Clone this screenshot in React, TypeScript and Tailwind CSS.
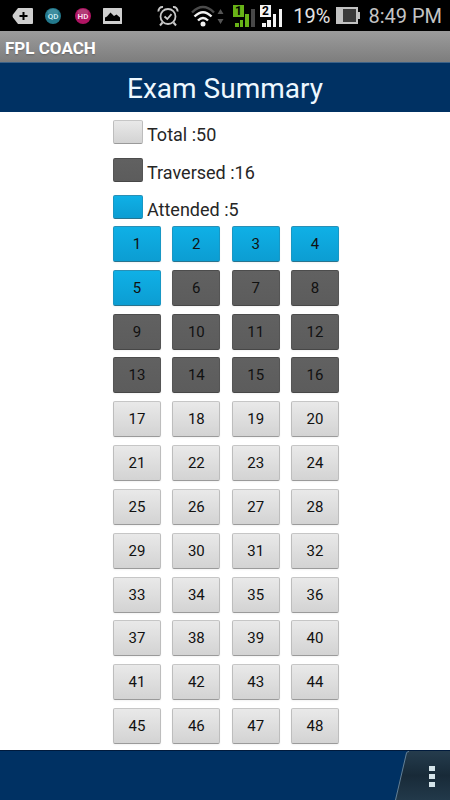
import React, { useState } from "react";
import clsx from "clsx";

const TOTAL = 50;
const TRAVERSED = 16;
const ATTENDED = 5;
const PER_PAGE = 48;

type Status = "attended" | "traversed" | "open";

// holo style button faces
const faces: Record<Status, string> = {
  attended:
    "border-t-[#2a8fb5] border-x-[#1897c4] border-b-[#28748f] bg-linear-to-b from-[#0fb0e6] to-[#0c9dd2]",
  traversed:
    "border-t-[#4c4c4c] border-x-[#555555] border-b-[#474747] bg-linear-to-b from-[#616161] to-[#5c5c5c]",
  open: "border-t-[#c6c6c6] border-x-[#bdbdbd] border-b-[#9a9a9a] bg-linear-to-b from-[#e9e9e9] to-[#d3d3d3]",
};

function statusOf(n: number): Status {
  if (n <= ATTENDED) return "attended";
  if (n <= TRAVERSED) return "traversed";
  return "open";
}

function StatusBar() {
  return (
    <div className="flex h-[31px] items-center justify-between bg-black pr-2 pl-3 text-[#c4c4c4]">
      <div className="flex items-center">
        <svg width="21" height="18" viewBox="0 0 21 18" className="mr-3">
          <path d="M6 1h14a1 1 0 0 1 1 1v14a1 1 0 0 1-1 1H6L1 10.500Q0 9 1 7.500Z" fill="#cfcfcf" />
          <path d="M11.500 5v8M7.500 9h8" stroke="#000" strokeWidth="2" />
        </svg>
        <svg width="16" height="16" viewBox="0 0 16 16" className="mr-3.5">
          <circle cx="8" cy="8" r="8" fill="#23798d" />
          <ellipse cx="8" cy="4" rx="5.500" ry="3" fill="#3f8d9f" />
          <text x="8" y="11" textAnchor="middle" fontSize="8" fontWeight="700" fill="#c6e6ed" fontFamily="Roboto">QD</text>
        </svg>
        <svg width="16" height="16" viewBox="0 0 16 16" className="mr-3">
          <circle cx="8" cy="8" r="8" fill="#b01463" />
          <ellipse cx="8" cy="4" rx="5.500" ry="3" fill="#b23c77" />
          <text x="8" y="11" textAnchor="middle" fontSize="8" fontWeight="700" fill="#f6dbe8" fontFamily="Roboto">HD</text>
        </svg>
        <svg width="19" height="16" viewBox="0 0 19 16">
          <rect width="19" height="16" rx="0.500" fill="#cfcfcf" />
          <path d="M2 13V9.500l2-1 3.500-4L11 8l2.500-1.500L17 9.500V13Z" fill="#000" />
        </svg>
      </div>

      <div className="flex items-center">
        <svg width="22" height="22" viewBox="0 0 22 22" fill="none" stroke="#c8c8c8" className="mr-3">
          <circle cx="11" cy="11.500" r="7.500" strokeWidth="1.800" />
          <path d="M7.500 11.500l2.800 2.500 4.200-4.800" strokeWidth="1.800" />
          <path d="M1.500 6.500a4 4 0 0 1 4.500-4.500M20.500 6.500A4 4 0 0 0 16 2" strokeWidth="2" />
          <path d="M5.500 17.500L3 20.500M16.500 17.500l2.500 3" strokeWidth="2" />
        </svg>
        <svg width="34" height="22" viewBox="0 0 34 22" fill="none" className="mr-2">
          <path d="M1 7.500Q12 -3.500 23 7.500" stroke="#4b4b4b" strokeWidth="2.400" />
          <path d="M3.500 11.500Q12 3 20.500 11.500" stroke="#f2f2f2" strokeWidth="2.400" />
          <path d="M7 15.500Q12 10.500 17 15.500" stroke="#f2f2f2" strokeWidth="2.400" />
          <circle cx="12" cy="19" r="2.500" fill="#f2f2f2" />
          <path d="M29.500 4l3 5h-6ZM29.500 19l-3-5h6Z" fill="#555" />
        </svg>
        <svg width="23" height="22" viewBox="0 0 23 22" className="mr-1">
          <rect width="11" height="12" fill="#68b317" />
          <text x="5.500" y="10" textAnchor="middle" fontSize="12" fontWeight="700" fill="#000" fontFamily="Roboto">1</text>
          <path d="M2 18h4v4H2ZM7 15h3v7H7ZM12 9h4v13h-4Z" fill="#68b317" />
          <path d="M18 4h4v18h-4Z" fill="#484848" />
        </svg>
        <svg width="23" height="22" viewBox="0 0 23 22" className="mr-2.5">
          <rect width="11" height="12" fill="#f2f2f2" />
          <text x="5.500" y="10" textAnchor="middle" fontSize="12" fontWeight="700" fill="#000" fontFamily="Roboto">2</text>
          <path d="M2 18h4v4H2ZM7 15h4v7H7ZM13 9h3v13h-3ZM19 4h3v18h-3Z" fill="#f2f2f2" />
        </svg>
        <span className="mr-1.5 text-[20px] leading-6 text-[#e4e4e4]">19%</span>
        <svg width="24" height="17" viewBox="0 0 24 17" className="mr-2">
          <path d="M0 0h22v5h2v7h-2v5H0Z" fill="#c2c2c2" />
          <path d="M7 2h13v13H7Z" fill="#3b3b3b" />
        </svg>
        <span className="text-[20px] leading-6">8:49 PM</span>
      </div>
    </div>
  );
}

function LegendRow({ status, label, count }: { status: Status; label: string; count: number }) {
  return (
    <li className="flex h-7 items-start gap-1">
      <span className={clsx("h-6 w-[30px] rounded-xs border", faces[status])} />
      <span className="pt-[3px] text-[18px] leading-6 text-[#262626]">
        {label} :{count}
      </span>
    </li>
  );
}

export default function App() {
  const [current, setCurrent] = useState(ATTENDED);
  const questions = Array.from({ length: PER_PAGE }, (_, i) => i + 1);

  return (
    <div className="flex min-h-screen flex-col bg-white font-[Roboto,sans-serif]">
      <StatusBar />

      <div className="flex h-8 items-center border-b border-[#3c6288] bg-linear-to-b from-[#9c9c9c] to-[#7d7d7d] px-[5px] pt-0.5">
        <span className="text-[17px] leading-6 font-bold text-white text-shadow-sm">FPL COACH</span>
      </div>

      <header className="flex h-[49px] items-center justify-center bg-[#003163] pt-0.5">
        <h1 className="text-[28px] leading-9 text-[#eef8ff]">Exam Summary</h1>
      </header>

      <main className="flex flex-1 flex-col items-center pt-2 pb-1.5 pl-0.5">
        <ul className="flex h-[103px] w-[226px] flex-col justify-between">
          <LegendRow status="open" label="Total" count={TOTAL} />
          <LegendRow status="traversed" label="Traversed" count={TRAVERSED} />
          <LegendRow status="attended" label="Attended" count={ATTENDED} />
        </ul>

        {/* question buttons */}
        <div className="mt-[3px] grid w-[226px] flex-1 grid-cols-[repeat(4,48px)] content-between justify-between gap-y-1">
          {questions.map((n) => (
            <button
              key={n}
              onClick={() => setCurrent(n)}
              aria-pressed={n === current}
              className={clsx(
                "h-9 rounded-xs border text-[15px] leading-5 text-[#111] shadow-xs",
                faces[statusOf(n)]
              )}
            >
              {n}
            </button>
          ))}
        </div>
      </main>

      <footer className="flex h-[50px] justify-end border-t border-[#001a3c] bg-[#003163]">
        <button aria-label="Menu" className="h-full">
          <svg width="55" height="49" viewBox="0 0 55 49">
            <defs>
              <linearGradient id="tab" x1="0" y1="0" x2="0" y2="1">
                <stop offset="0" stopColor="#253c4d" />
                <stop offset="0.500" stopColor="#182a38" />
                <stop offset="1" stopColor="#22394a" />
              </linearGradient>
            </defs>
            <path d="M0 49L11 2Q12 0 14 0H55V49Z" fill="url(#tab)" />
            <path d="M0.500 49L11.500 2Q12 0.500 14 0.500" fill="none" stroke="#5f7f99" />
            <path d="M34 15h6v5h-6ZM34 23h6v5h-6ZM34 31h6v5h-6Z" fill="#d5e4ea" />
          </svg>
        </button>
      </footer>
    </div>
  );
}
